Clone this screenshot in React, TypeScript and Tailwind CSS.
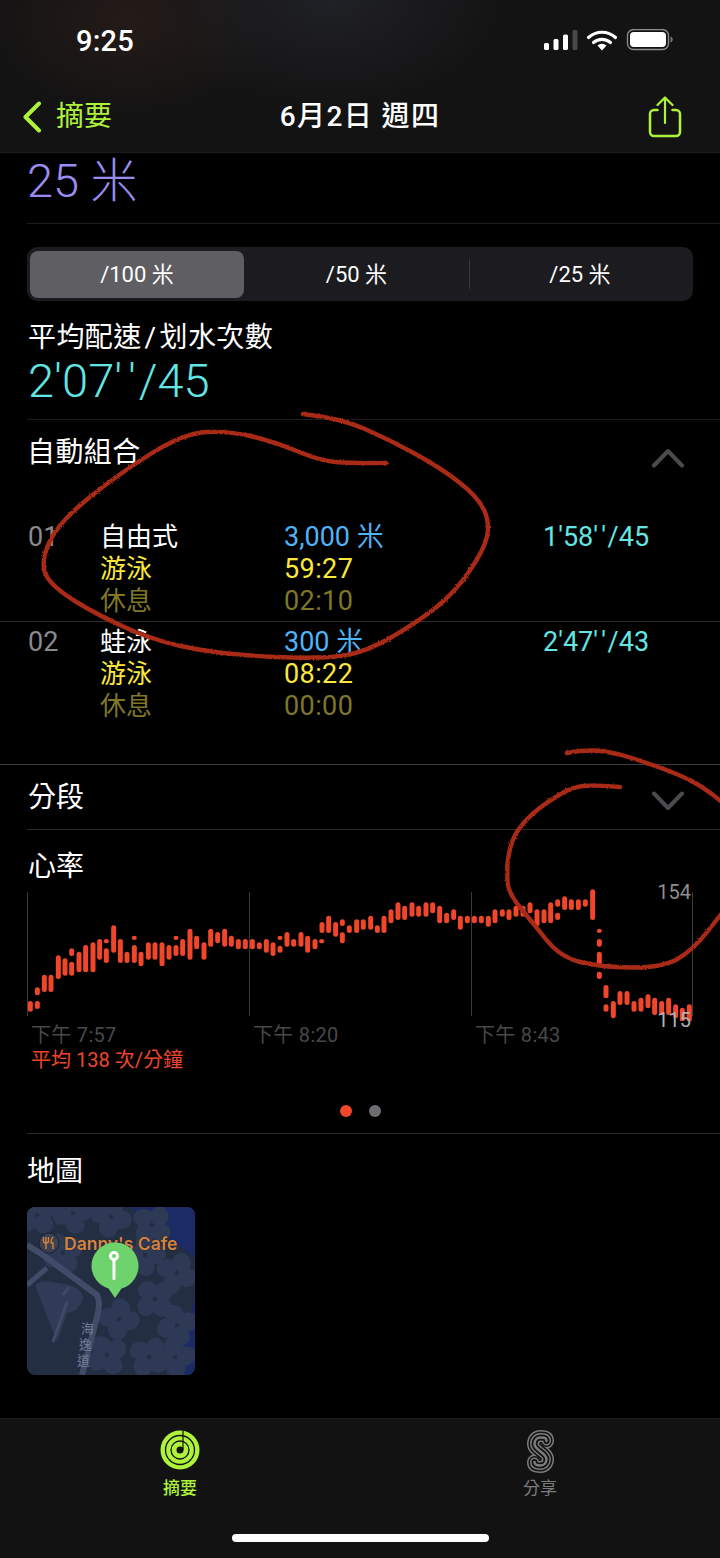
const FONT = "font-['Roboto','Noto_Sans_CJK_TC',sans-serif] [font-variant-ligatures:none]"

// chart columns, taken as [x, top, bottom, top, bottom, ...] from the 3x crops
const leftBars: number[][] = [
  [91, 453, 485], [112, 412, 436, 453, 477], [133, 374, 426], [153, 374, 426], [175, 316, 387],
  [195, 325, 377], [215, 295, 318, 335, 377], [237, 305, 367], [257, 285, 367], [279, 277, 367],
  [299, 267, 329], [319, 267, 280, 295, 339], [341, 226, 308], [361, 267, 339], [381, 305, 339],
  [403, 257, 270, 285, 339], [423, 305, 349], [445, 277, 329], [465, 277, 329], [486, 277, 349],
  [507, 285, 329], [528, 257, 270, 285, 318], [548, 267, 318], [570, 236, 329], [590, 257, 298],
  [612, 277, 329], [632, 236, 290], [653, 246, 280], [674, 236, 290], [694, 257, 290],
  [715, 267, 298], [736, 267, 298], [757, 267, 298], [778, 277, 298], [799, 267, 308],
  [819, 277, 318], [840, 257, 270, 287, 308], [861, 246, 290], [881, 267, 290], [903, 246, 290],
  [923, 257, 308], [945, 267, 298], [965, 267, 280], [966, 216, 249], [986, 197, 249],
  [1007, 216, 260], [1027, 208, 228, 247, 280], [1048, 226, 249], [1070, 208, 249],
]
const rightBars: number[][] = [
  [10, 208, 239], [32, 197, 239], [52, 226, 249], [72, 197, 249], [93, 178, 220], [114, 157, 210],
  [134, 167, 210], [156, 157, 200], [176, 167, 200], [198, 157, 200], [218, 157, 190], [239, 167, 220],
  [260, 188, 220], [281, 178, 210], [301, 197, 239], [322, 197, 220], [343, 197, 220], [364, 197, 220],
  [385, 197, 230], [405, 178, 220], [427, 178, 200], [447, 178, 210], [468, 167, 200], [489, 167, 200],
  [510, 157, 190], [531, 178, 228], [552, 178, 220], [572, 157, 220], [593, 148, 170, 188, 210],
  [614, 139, 180], [634, 148, 180], [655, 148, 180], [676, 148, 170], [698, 118, 210],
  [718, 236, 249, 267, 290, 305, 345, 365, 387], [738, 405, 445, 463, 485], [760, 453, 505],
  [780, 423, 465], [801, 423, 465], [822, 453, 485], [843, 443, 485], [864, 433, 475], [884, 443, 495],
  [905, 453, 495], [926, 443, 495], [947, 463, 505], [967, 473, 515], [988, 463, 515],
]

const CHART_TOP = 885

function HeartChart() {
  const segs: { x: number; y1: number; y2: number }[] = []
  const add = (bars: number[][], off: number) => {
    bars.forEach((b) => {
      for (let i = 1; i < b.length; i += 2) {
        segs.push({ x: off + b[0] / 3, y1: 850 + b[i] / 3 - CHART_TOP, y2: 850 + b[i + 1] / 3 - CHART_TOP })
      }
    })
  }
  add(leftBars, 0)
  add(rightBars, 360)
  return (
    <svg width="720" height="136" viewBox="0 0 720 136" className="block">
      {[27.5, 249.5, 471.5, 692.5].map((x) => (
        <line key={x} x1={x} x2={x} y1="7" y2="131" stroke="#3a3a3c" strokeWidth="1" />
      ))}
      {segs.map((s, i) => (
        <rect key={i} x={s.x - 2.5} y={s.y1} width="5" height={s.y2 - s.y1} rx="2.5" fill="#f0462a" />
      ))}
    </svg>
  )
}

// smooth line through the points, used for the hand drawn circles
function smooth(pts: number[][]) {
  let d = `M${pts[0][0]} ${pts[0][1]}`
  for (let i = 1; i < pts.length - 1; i++) {
    const mx = (pts[i][0] + pts[i + 1][0]) / 2
    const my = (pts[i][1] + pts[i + 1][1]) / 2
    d += ` Q${pts[i][0]} ${pts[i][1]} ${mx} ${my}`
  }
  const last = pts[pts.length - 1]
  return d + ` L${last[0]} ${last[1]}`
}

const circleOne = [
  [303, 414], [340, 418], [390, 440], [441, 468], [478, 497], [490, 523], [484, 550], [455, 592], [422, 619],
  [367, 652], [321, 659], [230, 655], [161, 643], [101, 617], [52, 587], [40, 563], [58, 523], [117, 475],
  [184, 433], [230, 431], [275, 442], [321, 461], [350, 463], [386, 463],
]
const circleTwoTop = [[567, 753], [590, 749], [620, 754], [647, 763], [680, 775], [703, 787], [722, 802]]
const circleTwoBody = [
  [620, 787], [593, 785], [573, 787], [550, 800], [527, 818], [513, 837], [508, 857], [507, 870], [508, 893],
  [533, 923], [560, 957], [600, 967], [662, 968], [693, 950], [722, 913],
]

function Scribbles() {
  return (
    <svg width="720" height="1558" viewBox="0 0 720 1558" className="absolute left-0 top-0 pointer-events-none">
      <defs>
        <filter id="rough" x="-5%" y="-5%" width="110%" height="110%">
          <feTurbulence type="fractalNoise" baseFrequency="0.6" numOctaves="2" seed="4" />
          <feDisplacementMap in="SourceGraphic" scale="2.5" />
        </filter>
      </defs>
      <g fill="none" stroke="#a92b16" strokeWidth="4.4" strokeLinecap="round" filter="url(#rough)">
        <path d={smooth(circleOne)} />
        <path d={smooth(circleTwoTop)} />
        <path d={smooth(circleTwoBody)} />
      </g>
    </svg>
  )
}

function StatusIcons() {
  return (
    <svg width="130" height="24" viewBox="0 0 130 24" className="block">
      <rect x="0" y="14" width="5" height="7" rx="1.5" fill="#fff" />
      <rect x="9.5" y="10" width="5" height="11" rx="1.5" fill="#fff" />
      <rect x="19" y="5.5" width="5" height="15.5" rx="1.5" fill="#fff" />
      <rect x="28.5" y="1" width="5" height="20" rx="1.5" fill="#48484a" />
      <path d="M44.5 8.5a20 20 0 0 1 27 0" fill="none" stroke="#fff" strokeWidth="3.2" strokeLinecap="round" />
      <path d="M49.5 13.5a13 13 0 0 1 17 0" fill="none" stroke="#fff" strokeWidth="3.2" strokeLinecap="round" />
      <path d="M58 21.5l-4.5-5a7 7 0 0 1 9 0z" fill="#fff" />
      <rect x="83.5" y="0.5" width="41" height="20" rx="6" fill="none" stroke="#8e8e90" strokeWidth="1.3" />
      <rect x="86" y="3" width="36" height="15" rx="3.8" fill="#fff" />
      <path d="M126.5 7.5c1.5.4 2.2 1.6 2.2 3s-.7 2.600-2.200 3z" fill="#77777a" />
    </svg>
  )
}

function ShareIcon() {
  return (
    <svg width="34" height="42" viewBox="0 0 34 42" fill="none" stroke="#aef23a" strokeLinecap="round" strokeLinejoin="round" className="block">
      <path d="M9.500 14H6a4 4 0 0 0-4 4v18a4 4 0 0 0 4 4h22a4 4 0 0 0 4-4V18a4 4 0 0 0-4-4h-3.500" strokeWidth="2.500" />
      <path d="M17 27V2M9.500 9L17 1.500 24.500 9" strokeWidth="2.200" />
    </svg>
  )
}

function Chevron({ up }: { up?: boolean }) {
  return (
    <svg width="34" height="20" viewBox="0 0 34 20" fill="none" className="block">
      <path
        d={up ? "M3 17.500L17 3l14 14.500" : "M3 2.500L17 17 31 2.500"}
        stroke="#4b4b4f"
        strokeWidth="4"
        strokeLinecap="round"
        strokeLinejoin="round"
      />
    </svg>
  )
}

// pace text, the two seconds ticks sit further apart than the font sets them
function Pace({ value }: { value: string }) {
  const [head, tail] = value.split("''")
  return (
    <>
      {head}'<span className="ml-[0.12em] mr-[0.06em]">'</span>{tail}
    </>
  )
}

function Row({ no, stroke, dist, pace, swim, rest, topClass }: { no: string; stroke: string; dist: string; pace: string; swim: string; rest: string; topClass: string }) {
  return (
    <div className={`grid grid-cols-[72px_184px_259px_1fr] pl-[28px] text-[26px] leading-[32px] ${topClass}`}>
      <div className="text-[#8a8a8e] text-[27px]">{no}</div>
      <div>
        <div className="text-white">{stroke}</div>
        <div className="text-[#fbe83c]">游泳</div>
        <div className="text-[#7f7726]">休息</div>
      </div>
      <div className="text-[27px]">
        <div className="text-[#4db4f7]">{dist}</div>
        <div className="text-[#fbe83c] tracking-[0.4px]">{swim}</div>
        <div className="text-[#7f7726] tracking-[0.4px]">{rest}</div>
      </div>
      <div className="text-[#62e6e4] text-[27px]"><Pace value={pace} /></div>
    </div>
  )
}

const trees = [
  [10, 8], [46, 6], [84, 10], [125, 18], [36, 46], [118, 48], [150, 66], [128, 92], [150, 118], [92, 112],
  [122, 150], [80, 148], [148, 150],
]

function MapThumb() {
  return (
    <svg width="168" height="168" viewBox="0 0 168 168" className="block rounded-[8px]">
      <rect width="168" height="168" fill="#242e42" />
      <path d="M103 0H168V51z" fill="#1c2a66" />
      <path d="M168 88L150 168H168z" fill="#1c2a66" />
      {trees.map(([x, y], i) => (
        <g key={i} fill="#2e3a55" transform={`translate(${x} ${y}) rotate(${i * 25 + 10})`}>
          <ellipse cx="-8" cy="-8" rx="10" ry="9" />
          <ellipse cx="8" cy="-8" rx="9" ry="10" />
          <ellipse cx="-8" cy="8" rx="9" ry="10" />
          <ellipse cx="8" cy="8" rx="10" ry="9" />
        </g>
      ))}
      <path d="M8 78Q14 72 30 76 56 78 56 92 52 104 40 106L30 135" fill="#2f3b57" />
      <path d="M0 38L16 48 70 88Q74 96 70 110L55 168" fill="none" stroke="#414d68" strokeWidth="6" />
      <path d="M0 78L20 61" fill="none" stroke="#414d68" strokeWidth="5" />
      <path d="M26 135L40 95M36 88L42 80" fill="none" stroke="#3e4a66" strokeWidth="3" />
      <text fill="#717d98" fontSize="13" fontFamily="'Noto Sans CJK TC',sans-serif">
        <tspan x="54" y="126">海</tspan>
        <tspan x="52" y="142">逸</tspan>
        <tspan x="50" y="158">道</tspan>
      </text>
      <circle cx="22" cy="36" r="10" fill="#3b4150" stroke="#1d2230" />
      <path d="M19 30v12M16.500 30v4q0 2 2.500 2t2.500-2v-4M26 30q-2 2-2 6h2v6" fill="none" stroke="#d5823f" strokeWidth="1.400" />
      <text x="37" y="43" fill="#d5823f" fontSize="17.500" fontWeight="600" stroke="#1d2230" strokeWidth="0.700" paintOrder="stroke" fontFamily="'Inter',sans-serif">
        Danny's Cafe
      </text>
      <path d="M64.500 59a23.500 23.500 0 1 1 30 22.500L88 91l-6.500-9.500A23.500 23.500 0 0 1 64.500 59z" fill="#6ed36d" />
      <rect x="85.500" y="49" width="3" height="24" rx="1.500" fill="#fff" />
      <circle cx="87" cy="49" r="5" fill="#fff" />
      <circle cx="87" cy="49" r="2" fill="#6ed36d" />
    </svg>
  )
}

function ActivityIcon() {
  return (
    <svg width="40" height="40" viewBox="0 0 40 40" className="block">
      <circle cx="20" cy="20" r="19.500" fill="#aef23a" />
      <circle cx="20" cy="20" r="14.500" fill="none" stroke="#121212" strokeWidth="1.300" />
      <circle cx="20" cy="20" r="9" fill="none" stroke="#121212" strokeWidth="1.300" />
      <circle cx="20" cy="20" r="3.500" fill="#121212" />
      <path d="M23 20V0" stroke="#121212" strokeWidth="1.200" />
    </svg>
  )
}

function SharingIcon() {
  const d = "M19.500 11C19.500 7.500 17 7.500 13.500 7.500 10 7.500 7.500 10 7.500 14 7.500 20 19.500 23 19.500 29 19.500 33 17 35.500 13.500 35.500 10 35.500 7.500 35 7.500 32"
  return (
    <svg width="27" height="43" viewBox="0 0 27 43" fill="none" strokeLinecap="round" className="block">
      <path d={d} stroke="#7c7c7c" strokeWidth="15" />
      <path d={d} stroke="#121212" strokeWidth="12" />
      <path d={d} stroke="#7c7c7c" strokeWidth="9" />
      <path d={d} stroke="#121212" strokeWidth="6" />
      <path d={d} stroke="#7c7c7c" strokeWidth="2.500" />
    </svg>
  )
}

export default function App() {
  return (
    <div className={`relative w-[720px] h-[1558px] overflow-hidden bg-black text-white flex flex-col ${FONT}`}>
      {/* status and nav bar */}
      <header className="h-[153px] shrink-0 flex flex-col bg-[radial-gradient(ellipse_180px_110px_at_330px_0px,#202126,transparent),radial-gradient(ellipse_150px_100px_at_130px_20px,#241b18,transparent)] bg-[#131313] border-b border-[#1c1c1e]">
        <div className="h-[82px] flex items-center justify-between pl-[76px] pr-[46px]">
          <span className="text-[29px] font-medium tracking-[0.2px] pt-[2px]">9:25</span>
          <StatusIcons />
        </div>
        <div className="relative h-[70px] flex items-center justify-between pl-[23px] pr-[38px]">
          <div className="flex items-center gap-[15px] text-[28px] text-[#aef23a]">
            <svg width="18" height="32" viewBox="0 0 18 32" fill="none" className="block">
              <path d="M16 2.500L2.500 16 16 29.500" stroke="#aef23a" strokeWidth="4" strokeLinecap="round" strokeLinejoin="round" />
            </svg>
            <span>摘要</span>
          </div>
          <div className="absolute left-0 right-0 text-center text-[28px] font-medium tracking-[1.4px]">6月2日 週四</div>
          <ShareIcon />
        </div>
      </header>

      <main className="flex-1 flex flex-col">
        <div className="h-[71px] ml-[27px] border-b border-[#1c1c1e] text-[47px] leading-[56px] text-[#9a8cf0] font-light">25 米</div>

        <div className="mt-[23px] mx-[27px] h-[54px] rounded-[10px] bg-[#1c1c20] p-[3px] flex items-center text-[22px]">
          <div className="w-[214px] h-[47px] rounded-[8px] bg-[#5e5e63] flex items-center justify-center">/100 米</div>
          <div className="w-[226px] flex items-center justify-center border-r border-[#3a3a3c] h-[30px]">/50 米</div>
          <div className="flex-1 flex items-center justify-center">/25 米</div>
        </div>

        <div className="mt-[19px] ml-[28px] text-[28px] leading-[36px] tracking-[0.4px]">平均配速<span className="px-[3px]">/</span>划水次數</div>
        <div className="ml-[28px] -mt-[1px] text-[47px] leading-[52px] text-[#62e6e4] font-light"><Pace value="2'07''/45" /></div>

        <div className="mt-[12px] ml-[27px] h-[86px] border-t border-[#1c1c1e] flex justify-between pr-[35px] pt-[15px]">
          <div className="text-[28px] leading-[36px] tracking-[0.4px]">自動組合</div>
          <div className="pt-[13px]"><Chevron up /></div>
        </div>

        <Row no="01" stroke="自由式" dist="3,000 米" pace="1'58''/45" swim="59:27" rest="02:10" topClass="mt-[16px] h-[100px]" />
        <div className="border-t border-[#2c2c2e]" />
        <Row no="02" stroke="蛙泳" dist="300 米" pace="2'47''/43" swim="08:22" rest="00:00" topClass="pt-[4px] h-[142px]" />

        <div className="h-[65px] border-t border-[#3a3a3c] flex items-center justify-between pl-[28px] pr-[35px]">
          <span className="text-[28px] pt-[2px]">分段</span>
          <div className="pt-[8px]"><Chevron /></div>
        </div>

        <div className="ml-[27px] border-t border-[#2c2c2e] h-[36px]" />
        <div className="ml-[28px] -mt-[16px] text-[28px] leading-[36px]">心率</div>

        <div className="relative">
          <HeartChart />
          <span className="absolute right-[29px] top-[-8px] text-[20px] text-[#8e8e93]">154</span>
          <span className="absolute right-[29px] top-[120px] text-[20px] text-[#b0b0b4]">115</span>
        </div>
        <div className="grid grid-cols-[222px_222px_1fr] pl-[31px] mt-[1px] text-[20px] leading-[26px] text-[#48484a] tracking-[0.3px]">
          <span>下午 7:57</span>
          <span>下午 8:20</span>
          <span>下午 8:43</span>
        </div>
        <div className="pl-[31px] mt-[1px] text-[20px] leading-[22px] text-[#f0462a]">平均 138 次/分鐘</div>

        <div className="mt-[34px] flex justify-center gap-[17px]">
          <span className="w-[12px] h-[12px] rounded-full bg-[#f0462a]" />
          <span className="w-[12px] h-[12px] rounded-full bg-[#6e6e72]" />
        </div>

        <div className="mt-[16px] ml-[27px] border-t border-[#2c2c2e] pt-[20px] text-[28px] leading-[36px]">地圖</div>
        <div className="mt-[17px] ml-[27px]"><MapThumb /></div>
      </main>

      {/* tab bar */}
      <footer className="h-[140px] shrink-0 bg-[#121212] border-t border-[#1c1c1e] flex flex-col">
        <div className="grid grid-cols-2 pt-[11px]">
          <div className="flex flex-col items-center text-[#aef23a] text-[17px] font-medium">
            <ActivityIcon />
            <span className="mt-[6px] leading-[24px]">摘要</span>
          </div>
          <div className="flex flex-col items-center text-[#7c7c7c] text-[17px]">
            <SharingIcon />
            <span className="mt-[3px] leading-[24px]">分享</span>
          </div>
        </div>
        <div className="mt-[34px] mx-auto w-[257px] h-[8px] rounded-full bg-white" />
      </footer>

      <Scribbles />
    </div>
  )
}
